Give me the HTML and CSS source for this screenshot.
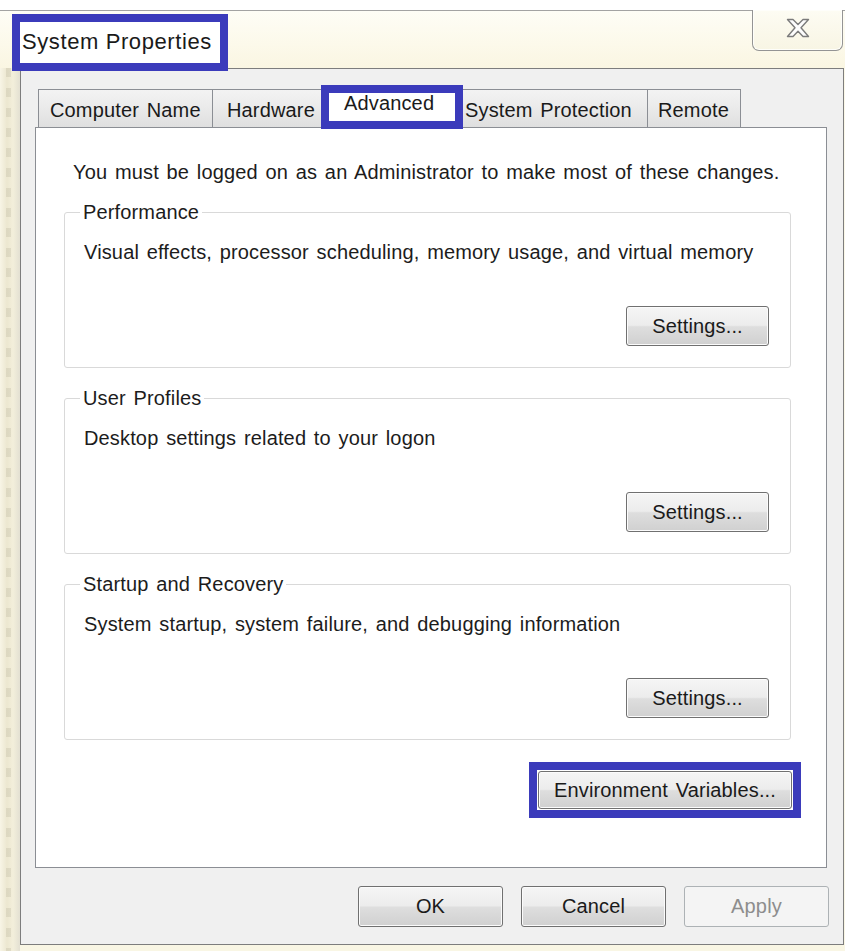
FILE: index.html
```html
<!DOCTYPE html>
<html lang="en">
<head>
<meta charset="utf-8">
<title>System Properties</title>
<link rel="stylesheet" href="styles.css">
</head>
<body>
<div class="screen">
  <div class="window">
    <div class="titlebar">
      <div class="title-mark"><span class="title-text">System Properties</span></div>
      <div class="close-btn" aria-label="Close">
        <svg width="26" height="20" viewBox="0 0 26 20">
          <polygon points="2.5,1.5 8,1.5 13,6.5 18,1.5 23.5,1.5 16,9.8 23.5,18.5 18,18.5 13,13.2 8,18.5 2.5,18.5 10,9.8" fill="#fdfdfd" stroke="#7b7b7b" stroke-width="1.4" stroke-linejoin="round"/>
        </svg>
      </div>
    </div>
    <div class="frame">
      <div class="frame-edge"></div>
      <div class="dialog">
        <div class="tabs">
          <div class="tab tab-name">Computer Name</div>
          <div class="tab tab-hw">Hardware</div>
          <div class="tab tab-adv">Advanced</div>
          <div class="tab tab-sp">System Protection</div>
          <div class="tab tab-remote">Remote</div>
        </div>
        <div class="panel">
          <p class="notice">You must be logged on as an Administrator to make most of these changes.</p>

          <section class="group group-first">
            <div class="group-title"><span>Performance</span></div>
            <p class="group-desc">Visual effects, processor scheduling, memory usage, and virtual memory</p>
            <button class="btn btn-settings">Settings...</button>
          </section>

          <section class="group">
            <div class="group-title"><span>User Profiles</span></div>
            <p class="group-desc">Desktop settings related to your logon</p>
            <button class="btn btn-settings">Settings...</button>
          </section>

          <section class="group">
            <div class="group-title"><span>Startup and Recovery</span></div>
            <p class="group-desc">System startup, system failure, and debugging information</p>
            <button class="btn btn-settings">Settings...</button>
          </section>

          <div class="env-mark">
            <button class="btn btn-env">Environment Variables...</button>
          </div>
        </div>
        <div class="footer">
          <button class="btn btn-foot">OK</button>
          <button class="btn btn-foot">Cancel</button>
          <button class="btn btn-foot btn-disabled">Apply</button>
        </div>
      </div>
    </div>
  </div>
</div>
</body>
</html>
```

FILE: styles.css
```css
* {
  box-sizing: border-box;
}

html, body {
  margin: 0;
  padding: 0;
  background: #ffffff;
}

body {
  font-family: "Liberation Sans", Arial, sans-serif;
  font-size: 20px;
  letter-spacing: 0.15px;
  word-spacing: 2px;
  color: #1c1c1c;
}

.screen {
  width: 845px;
  height: 951px;
  overflow: hidden;
  padding-top: 10px;
  background: #ffffff;
}

.window {
  height: 941px;
  display: flex;
  flex-direction: column;
  background: linear-gradient(180deg, #fdfcf4 0%, #fbf8e8 6%, #f9f6e4 100%);
}

/* ---------- title bar ---------- */
.titlebar {
  height: 58px;
  flex: none;
  display: flex;
  justify-content: space-between;
  align-items: flex-start;
  padding-left: 12px;
  border-top: 1px solid #a3a3a3;
  background: linear-gradient(180deg, #fefdf6 0%, #fcf9ea 60%, #faf6e2 100%);
}

.title-mark {
  position: relative;
  z-index: 2;
  margin-top: 3px;
  width: 216px;
  height: 57px;
  border: 8px solid #3b3bbb;
  background: #ffffff;
  padding-left: 2px;
  display: flex;
  align-items: center;
}

.title-text {
  font-size: 22px;
  letter-spacing: 0.6px;
  word-spacing: 0;
  color: #1a1a1a;
  line-height: 1;
  padding-bottom: 1px;
}

.close-btn {
  width: 91px;
  height: 41px;
  margin-top: -1px;
  margin-right: 2px;
  border: 1px solid #949494;
  border-top: none;
  border-radius: 0 0 7px 7px;
  background: linear-gradient(180deg, #fdfcf3 0%, #f8f5e4 100%);
  box-shadow: inset 0 0 0 1px #fefefa;
  display: flex;
  align-items: center;
  justify-content: center;
  padding-bottom: 4px;
}

/* ---------- frame + dialog ---------- */
.frame {
  flex: 1;
  display: flex;
}

.frame-edge {
  width: 20px;
  flex: none;
  background:
    repeating-linear-gradient(180deg, rgba(150, 145, 120, 0.18) 0 9px, rgba(255, 255, 255, 0) 9px 20px) 6px 0 / 5px 100% no-repeat,
    linear-gradient(90deg, #f8f5e6 0%, #ece7d0 35%, #f3efdb 65%, #e3e0d2 100%);
}

.dialog {
  width: 824px;
  height: 877px;
  border: 1px solid #7d7d7d;
  background: #f0f0f0;
  padding: 20px 16px 0 14px;
  display: flex;
  flex-direction: column;
}

/* ---------- tabs ---------- */
.tabs {
  display: flex;
  align-items: flex-end;
  height: 38px;
  margin-left: 3px;
  position: relative;
  z-index: 1;
}

.tab {
  height: 38px;
  border: 1px solid #8b8e94;
  border-bottom: none;
  background: linear-gradient(180deg, #f3f3f3 0%, #ebebeb 45%, #dfdfdf 100%);
  padding-top: 4px;
  line-height: 32px;
  color: #1a1a1a;
  white-space: nowrap;
}

.tab-name {
  width: 175px;
  padding-left: 11px;
}

.tab-hw {
  width: 118px;
  margin-left: -1px;
  padding-left: 14px;
}

.tab-adv {
  position: relative;
  z-index: 2;
  width: 142px;
  height: 44px;
  margin-left: -9px;
  margin-right: -8px;
  margin-bottom: -2px;
  border: 8px solid #3b3bbb;
  background: #ffffff;
  padding: 0 0 0 15px;
  line-height: 20px;
}

.tab-sp {
  width: 193px;
  padding-left: 9px;
}

.tab-remote {
  width: 94px;
  margin-left: -1px;
  padding-left: 10px;
}

/* ---------- tab page ---------- */
.panel {
  height: 741px;
  flex: none;
  border: 1px solid #8b8e94;
  background: #ffffff;
  padding: 0 35px 0 28px;
  display: flex;
  flex-direction: column;
}

.notice {
  margin: 32px 0 0 9px;
  line-height: 24px;
  white-space: nowrap;
}

.group {
  margin-top: 30px;
  border: 1px solid #d9d9d9;
  border-radius: 3px;
  padding: 0 21px 21px 19px;
  display: flex;
  flex-direction: column;
}

.group-first {
  margin-top: 28px;
}

.group-title {
  margin-top: -13px;
  line-height: 24px;
}

.group-title span {
  background: #ffffff;
  padding: 0 3px;
  margin-left: -4px;
}

.group-desc {
  margin: 16px 0 0 0;
  line-height: 24px;
  white-space: nowrap;
}

/* ---------- buttons ---------- */
.btn {
  font-family: inherit;
  font-size: 20px;
  letter-spacing: inherit;
  word-spacing: inherit;
  color: #1a1a1a;
  border: 1px solid #707070;
  border-radius: 3px;
  background: linear-gradient(180deg, #f5f5f5 0%, #ececec 48%, #dedede 52%, #d0d0d0 100%);
  box-shadow: inset 0 0 0 1px #fbfbfb;
  padding: 0;
  cursor: default;
}

.btn-settings {
  align-self: flex-end;
  margin-top: 42px;
  width: 143px;
  height: 40px;
}

.env-mark {
  align-self: flex-end;
  margin-top: 22px;
  margin-right: -10px;
  border: 8px solid #3b3bbb;
  background: #ffffff;
  padding: 1px;
}

.btn-env {
  display: block;
  width: 254px;
  height: 38px;
}

.footer {
  display: flex;
  justify-content: flex-end;
  gap: 18px;
  margin-top: 18px;
  margin-right: -2px;
}

.btn-foot {
  width: 145px;
  height: 41px;
}

.btn-disabled {
  color: #8d8d8d;
  border-color: #adb2b5;
  background: #f4f4f4;
  box-shadow: none;
}
```
